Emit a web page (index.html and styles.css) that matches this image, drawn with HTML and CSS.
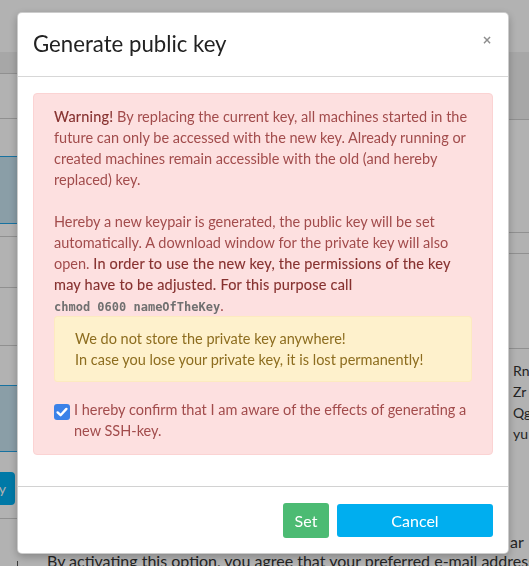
FILE: index.html
```html
<!DOCTYPE html>
<html lang="en">
<head>
<meta charset="utf-8">
<title>Generate public key</title>
<link rel="stylesheet" href="styles.css">
</head>
<body>
<div class="page">
  <div class="topbar"></div>
  <div class="table">
    <div class="col col-left">
      <div class="cell head h21"></div>
      <div class="cell h44"></div>
      <div class="cell h37 blue-line"></div>
      <div class="cell sel h66"></div>
      <div class="cell h12"></div>
      <div class="cell h50"></div>
      <div class="cell h57"></div>
      <div class="cell h39 blue-line"></div>
      <div class="cell sel h64"></div>
      <div class="cell h66 btn-cell"><span class="page-btn">Copy</span></div>
    </div>
    <div class="col col-right">
      <div class="cell head h67"></div>
      <div class="cell h112"></div>
      <div class="cell h20"></div>
      <div class="cell h94"></div>
      <div class="key-text">Rn<br>Zr<br>Qg<br>yu</div>
      <div class="key-tail">ar</div>
    </div>
  </div>
  <div class="foot-row">
    <span class="tick"></span>
    <p class="footnote">By activating this option, you agree that your preferred e-mail address may be used.</p>
  </div>
</div>

<div class="overlay">
  <div class="modal">
    <div class="modal-header">
      <h4 class="modal-title">Generate public key</h4>
      <button class="close" type="button">×</button>
    </div>
    <div class="modal-body">
      <div class="alert alert-danger">
        <p><strong>Warning!</strong> By replacing the current key, all machines started in the future can only be accessed with the new key. Already running or created machines remain accessible with the old (and hereby replaced) key.</p>
        <p>Hereby a new keypair is generated, the public key will be set automatically. A download window for the private key will also open. <strong>In order to use the new key, the permissions of the key may have to be adjusted. For this purpose call</strong><br><code>chmod 0600 nameOfTheKey</code>.</p>
        <div class="alert-warning">
          We do not store the private key anywhere!<br>
          In case you lose your private key, it is lost permanently!
        </div>
        <label class="confirm">
          <span class="check"><svg viewBox="0 0 16 16" width="16" height="16"><rect x="0" y="0" width="16" height="16" rx="3" fill="#3b82e8"/><path d="M3.6 8.4 L6.6 11.2 L12.4 4.9" fill="none" stroke="#fff" stroke-width="2.4" stroke-linecap="round" stroke-linejoin="round"/></svg></span>
          <span class="confirm-text">I hereby confirm that I am aware of the effects of generating a new SSH-key.</span>
        </label>
      </div>
    </div>
    <div class="modal-footer">
      <button class="btn btn-set" type="button">Set</button>
      <button class="btn btn-cancel" type="button">Cancel</button>
    </div>
  </div>
</div>
</body>
</html>
```

FILE: styles.css
```css
* { box-sizing: border-box; }

html, body {
  margin: 0;
  padding: 0;
  width: 529px;
  height: 566px;
  overflow: hidden;
}

body {
  font-family: Lato, "Open Sans", sans-serif;
  font-size: 14.5px;
  line-height: 21px;
  color: #333;
  background: #fff;
}

/* ---------- background page ---------- */
.page {
  height: 566px;
  overflow: hidden;
}

.topbar {
  height: 52px;
  background: #fff;
}

.table {
  display: flex;
  justify-content: space-between;
  height: 490px;
}

.col-left { width: 160px; }
.col-right { width: 200px; }

.cell {
  border-bottom: 1px solid #cfcfcf;
}
.cell.head { background: #f0f0f0; }
.cell.blue-line { border-bottom-color: #23a4e6; }
.cell.sel {
  background: #c6e2f0;
  border-bottom-color: #23a4e6;
}

.h12 { height: 13px; }
.h20 { height: 21px; }
.h21 { height: 22px; }
.h37 { height: 38px; }
.h39 { height: 40px; }
.h44 { height: 45px; }
.h50 { height: 51px; }
.h57 { height: 58px; }
.h64 { height: 66px; }
.h66 { height: 67px; }
.h67 { height: 68px; }
.h94 { height: 95px; }
.h112 { height: 113px; }

.btn-cell {
  display: flex;
  align-items: flex-start;
  justify-content: flex-end;
  padding: 20px 145px 0 0;
}

.page-btn {
  display: block;
  background: #00aeef;
  color: #fff;
  border-radius: 4px;
  height: 33px;
  line-height: 33px;
  padding: 0 9px 0 40px;
  font-size: 14px;
}

.key-text {
  padding: 11px 0 0 184px;
  font-size: 14px;
  line-height: 21px;
  white-space: nowrap;
}

.key-tail {
  padding: 87px 0 0 181px;
  font-size: 16px;
}

.foot-row {
  display: flex;
  padding: 8px 0 0 17px;
}

.tick {
  flex: none;
  width: 1px;
  height: 10px;
  margin-top: 11px;
  background: #555;
}

.footnote {
  margin: 0 0 0 29px;
  font-size: 16px;
  line-height: 21px;
  white-space: nowrap;
}

/* ---------- overlay + modal ---------- */
.overlay {
  position: fixed;
  inset: 0;
  background: rgba(0, 0, 0, 0.3);
  padding: 12px 0 0 17px;
}

.modal {
  width: 492px;
  background: #fff;
  border: 1px solid rgba(0, 0, 0, 0.2);
  border-radius: 5px;
  box-shadow: 0 3px 9px rgba(0, 0, 0, 0.25);
}

.modal-header {
  display: flex;
  justify-content: space-between;
  align-items: flex-start;
  height: 64px;
  padding: 16px 15px 0 15px;
  border-bottom: 1px solid #d7d7d7;
}

.modal-title {
  margin: 0;
  font-size: 22.2px;
  font-weight: 400;
  line-height: 30px;
  color: #222;
}

.close {
  border: 0;
  background: none;
  padding: 0;
  margin: 3px 1px 0 0;
  font-family: "DejaVu Sans", sans-serif;
  font-size: 12px;
  line-height: 16px;
  font-weight: 700;
  color: #8e8e8e;
}

.modal-body {
  padding: 16px 15px 31px 15px;
}

.alert {
  border: 1px solid #fbd3d3;
  border-radius: 4px;
  padding: 12px 20px 13px 20px;
}

.alert-danger {
  background: #fde0e0;
  color: #a24c4c;
}

.alert p {
  margin: 0 0 21px 0;
}
.alert p:nth-of-type(2) { margin-bottom: 0; }

.alert strong {
  font-weight: 400;
  letter-spacing: 0.2px;
  color: #86312f;
  -webkit-text-stroke: 0.12px #86312f;
}

.alert code {
  font-family: "DejaVu Sans Mono", monospace;
  font-weight: 700;
  font-size: 12px;
  line-height: 1;
  color: #707070;
}

.alert-warning {
  background: #fef1cc;
  border: 1px solid #fdeac0;
  border-radius: 3px;
  color: #8d6d1f;
  padding: 11px 20px;
  line-height: 21px;
}

.confirm {
  display: flex;
  gap: 4px;
  margin-top: 17px;
}

.check {
  flex: none;
  width: 16px;
  height: 16px;
  margin-top: 5px;
  display: block;
}
.check svg { display: block; }

.modal-footer {
  display: flex;
  justify-content: flex-end;
  gap: 8px;
  padding: 16px 15px 15px;
  border-top: 1px solid #d2d2d2;
}

.btn {
  font-family: Lato, "Open Sans", sans-serif;
  font-size: 16px;
  color: #fff;
  border-radius: 3px;
  height: 35px;
  border: 0;
  padding: 0;
}

.btn-set {
  width: 46px;
  background: #4cbb73;
}

.btn-cancel {
  width: 156px;
  height: 33px;
  margin-top: 1px;
  background: #00aeef;
}
```
